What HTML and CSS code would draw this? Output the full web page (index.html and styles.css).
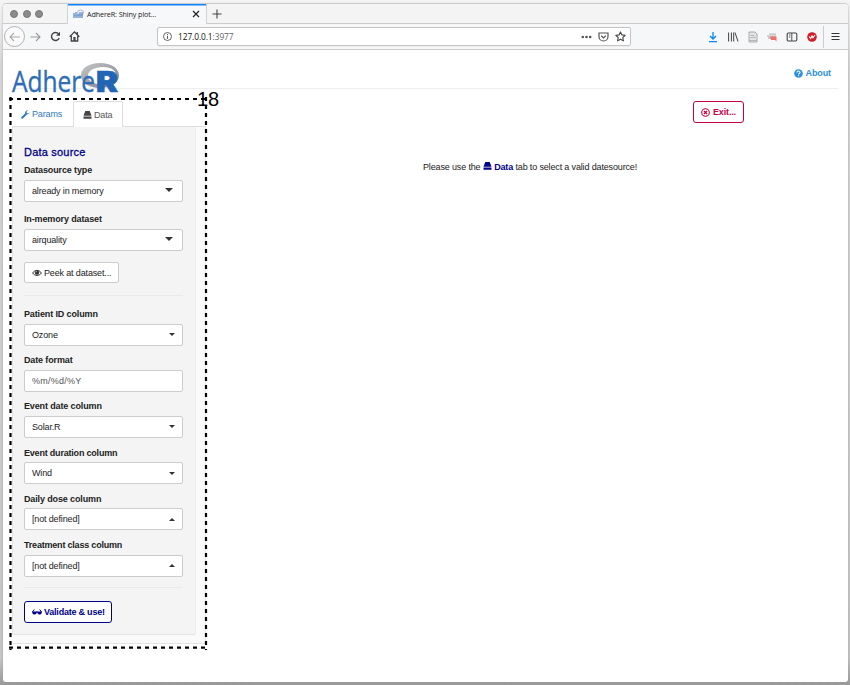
FILE: index.html
```html
<!DOCTYPE html>
<html lang="en">
<head>
<meta charset="utf-8">
<title>AdhereR: Shiny plot...</title>
<link rel="stylesheet" href="styles.css">
</head>
<body>
<svg class="defs" width="0" height="0">
  <symbol id="drive" viewBox="0 0 18 16"><path d="M4.500 0h9L17 9.500H1z M1 11h16v4.500H1z"/></symbol>
</svg>
<div class="window">
  <header class="tabbar">
    <div class="lights"><i></i><i></i><i></i></div>
    <div class="browser-tab">
      <svg class="favicon" viewBox="0 0 11 10"><ellipse cx="7.500" cy="3.500" rx="3" ry="2.500" fill="none" stroke="#a5b4cf"/><path d="M1 4v5M3 3v6M5 5v4M7 3v6M9 3v6" fill="none" stroke="#477bc0" stroke-width="1.100"/><path d="M1 6.500h9" stroke="#7ea2d4"/></svg>
      <span>AdhereR: Shiny plot...</span>
      <svg class="close" viewBox="0 0 8 8"><path d="M1 1l6 6M7 1L1 7" stroke="#222" stroke-width="1.200"/></svg>
    </div>
    <svg class="plus" viewBox="0 0 10 10"><path d="M5 .5v9M.5 5h9" stroke="#444" stroke-width="1.100"/></svg>
  </header>
  <nav class="toolbar">
    <div class="back"><svg width="12" height="10" viewBox="0 0 12 10"><path d="M11 5H1.500M5 1L1 5l4 4" fill="none" stroke="#aaa" stroke-width="1.100"/></svg></div>
    <svg class="forward" width="11" height="10" viewBox="0 0 11 10"><path d="M.5 5h9M6 1l4 4-4 4" fill="none" stroke="#999" stroke-width="1.100"/></svg>
    <svg class="reload" width="11" height="11" viewBox="0 0 11 11"><path d="M9.200 7A4 4 0 1 1 8.500 2.800" fill="none" stroke="#444" stroke-width="1.400"/><path d="M10 .7v4H6z" fill="#444"/></svg>
    <svg class="home" width="11" height="11" viewBox="0 0 11 11"><path d="M.7 5.700l4.800-4.800 4.800 4.800M2.300 5v5h6.400V5M8.300 1v2.500" fill="none" stroke="#444" stroke-width="1.300"/><path d="M4.400 6h2.200v4H4.400z" fill="#444"/></svg>
    <div class="address">
      <svg width="9" height="9" viewBox="0 0 9 9"><circle cx="4.500" cy="4.500" r="4" fill="none" stroke="#555" stroke-width=".9"/><path d="M4.500 2v1.100M4.500 3.900v3" stroke="#555"/></svg>
      <span class="url"><b>127.0.0.1</b>:3977</span>
      <svg class="dots" width="11" height="4" viewBox="0 0 11 4"><circle cx="1.800" cy="2" r="1.300"/><circle cx="5.500" cy="2" r="1.300"/><circle cx="9.200" cy="2" r="1.300"/></svg>
      <svg class="pocket" width="11" height="10" viewBox="0 0 11 10"><path d="M1 1h9v3.500a4.500 4.500 0 0 1-9 0zM3.200 3.700l2.300 2.200 2.300-2.200" fill="none" stroke="#555" stroke-width="1.200"/></svg>
      <svg class="star" width="11" height="11" viewBox="0 0 11 11"><path d="M5.500.9l1.400 3 3.300.4-2.400 2.200.6 3.400-2.900-1.700-2.900 1.700.6-3.400L.8 4.300l3.300-.4z" fill="none" stroke="#444" stroke-width="1.100" stroke-linejoin="round"/></svg>
    </div>
    <div class="tools">
      <svg viewBox="0 0 12 12"><path d="M6 1v7M3 5l3 3 3-3M2 10.700h8" fill="none" stroke="#0a84ff" stroke-width="1.300"/></svg>
      <svg viewBox="0 0 12 12"><path d="M1.600 1.500v9M4.400 1.500v9M6.700 1.500v9M8 1.500l3 9" fill="none" stroke="#444" stroke-width="1"/></svg>
      <svg viewBox="0 0 12 12"><path d="M2 1h6l2 2v8H2z" fill="#e5e5e5" stroke="#999" stroke-width=".8"/><path d="M3.500 4.500h4M3.500 6.500h5M2 9.500h8" stroke="#aaa" stroke-width=".8"/></svg>
      <svg viewBox="0 0 12 12"><path d="M3 3.200h7M1 5.200h9" stroke="#bbb" stroke-width="1.200"/><path d="M4 5.500h6.500V10.500L9 9H5z" fill="#ec7168"/><path d="M2 7h3" stroke="#999"/></svg>
      <svg viewBox="0 0 12 12"><rect x="1.200" y="2" width="9.600" height="8" rx="1.200" fill="none" stroke="#444" stroke-width="1.100"/><path d="M5.800 2v8M3 4h1.400M3 6h1.400" stroke="#444" stroke-width=".9"/></svg>
      <svg viewBox="0 0 12 12"><circle cx="6" cy="6" r="4.800" fill="#ce1e2a"/><path d="M3 5.500l1.600 2L6 5l1 1.800L9 4" fill="none" stroke="#fff" stroke-width="1.100"/></svg>
    </div>
    <svg class="menu" viewBox="0 0 9 9"><path d="M.5 1.500h8M.5 4.500h8M.5 7.500h8" stroke="#333"/></svg>
  </nav>
  <main class="page">
    <div class="masthead">
      <svg class="logo" width="110" height="34" viewBox="0 0 110 34">
        <defs><linearGradient id="ring" x1="0" y1="0" x2="1" y2="1"><stop offset="0" stop-color="#c5c6c9"/><stop offset="1" stop-color="#7d7f84"/></linearGradient></defs>
        <path fill="url(#ring)" fill-rule="evenodd" d="M88 0c11 0 19 5 19 12.500S99 25 88 25s-19-5-19-12.500S77 0 88 0zM91 4c-9 0-15 3.500-15 9s6 8.500 15 8.500 13-3 13-8.500S100 4 91 4z"/>
        <text class="logo-light" x="0" y="28.700" textLength="83" lengthAdjust="spacingAndGlyphs">Adhere</text>
        <text class="logo-bold" x="84" y="28.700" textLength="22" lengthAdjust="spacingAndGlyphs">R</text>
      </svg>
      <a class="about"><svg width="9" height="9" viewBox="0 0 9 9"><circle cx="4.500" cy="4.500" r="4.300" fill="#2b8fd9"/><path d="M3 3.600c0-2 3-2 3-.2 0 1.100-1.500 1-1.500 2M4.500 6.200v1.100" fill="none" stroke="#fff" stroke-width="1.100"/></svg>About</a>
    </div>
    <div class="columns">
      <section class="sidebar">
        <div class="tabs">
          <a class="tab link"><svg width="9" height="9" viewBox="0 0 9 9"><path d="M1.200 7.800L5 4" stroke="#337ab7" stroke-width="2" stroke-linecap="round"/><path d="M8.700 2.400L7.200 3.500 5.700 2.900 5.600 1.500 7.100.3A2.700 2.700 0 0 0 4 3.200 2.700 2.700 0 0 0 8.700 2.400z" fill="#337ab7"/></svg>Params</a>
          <a class="tab active"><svg width="9" height="8"><use href="#drive"/></svg>Data</a>
        </div>
        <div class="panel">
          <form class="well">
            <h4>Data source</h4>
            <div class="field source"><label>Datasource type</label><div class="control big">already in memory<i class="down"></i></div></div>
            <div class="field memory"><label>In-memory dataset</label><div class="control big">airquality<i class="down"></i></div></div>
            <a class="button peek"><svg width="10" height="8" viewBox="0 0 10 8"><path d="M.5 4Q5-1.500 9.500 4 5 9 .5 4z" fill="none" stroke="#333"/><circle cx="5" cy="3.600" r="2.200" fill="#333"/><path d="M4 3.300q0-1 1-1" fill="none" stroke="#fff" stroke-width=".6"/></svg>Peek at dataset...</a>
            <hr>
            <div class="field"><label>Patient ID column</label><div class="control">Ozone<i class="down"></i></div></div>
            <div class="field"><label>Date format</label><div class="control input">%m/%d/%Y</div></div>
            <div class="field"><label>Event date column</label><div class="control">Solar.R<i class="down"></i></div></div>
            <div class="field"><label class="long">Event duration column</label><div class="control">Wind<i class="down"></i></div></div>
            <div class="field"><label>Daily dose column</label><div class="control">[not defined]<i class="up"></i></div></div>
            <div class="field"><label class="long">Treatment class column</label><div class="control">[not defined]<i class="up"></i></div></div>
            <hr class="last">
            <a class="button validate"><svg width="10" height="6" viewBox="0 0 10 6"><path d="M0 2.500h4.700V4Q4 5.500 2.400 5.500T.3 4zM5.300 2.500H10L9.700 4Q9.200 5.500 7.600 5.500T5.300 4z" fill="#00008b"/><path d="M.5 3L2.300.5M9.500 3L7.700.5M4 3h2" stroke="#00008b" fill="none"/></svg>Validate &amp; use!</a>
          </form>
        </div>
      </section>
      <section class="content">
        <a class="exit"><svg width="9" height="9" viewBox="0 0 9 9"><circle cx="4.500" cy="4.500" r="3.800" fill="none" stroke="#c40046" stroke-width="1.100"/><path d="M3 3l3 3M6 3L3 6" stroke="#c40046" stroke-width="1.300"/></svg>Exit...</a>
        <p class="message">Please use the <svg width="9" height="8"><use href="#drive"/></svg> <b>Data</b> tab to select a valid datesource!</p>
      </section>
    </div>
  </main>
</div>
<svg class="callout" width="199" height="553"><path d="M0 2H199M0 550.700H199M1.500 0V553M197 0V553" fill="none" stroke="#000" stroke-width="2.200" stroke-dasharray="4 4"/></svg>
<span class="callout-number">18</span>
</body>
</html>
```

FILE: styles.css
```css
* { box-sizing: border-box; }
body { margin: 0; height: 685px; padding: 3px; overflow: hidden; background: linear-gradient(#f5f5f5, #d5d5d5 10%, #c4c4c4 96%, #999); font: 9px/14px "Liberation Sans", Arial, sans-serif; color: #222; }
svg { flex: none; display: block; }
.defs { position: absolute; }
.window { width: 845px; height: 679px; background: #fff; border-radius: 4px 4px 3px 3px; border-top: 1px solid #ccc; overflow: hidden; box-shadow: 0 1px 2px #999; }
.tabbar { height: 20px; display: flex; align-items: center; background: #f4f4f4; border-bottom: 1px solid #cbcbcb; }
.lights { display: flex; gap: 4.500px; padding-left: 7px; width: 64px; }
.lights i { width: 8px; height: 8px; border-radius: 50%; background: #8b8b8b; border: 1px solid #777; }
.browser-tab { width: 140px; height: 20px; display: flex; align-items: center; border: solid #d2d2d2; border-width: 0 1px; box-shadow: inset 0 1.500px #0a84ff; background: #f7f8fa; font: 7.200px "Open Sans", sans-serif; color: #222; padding: 1px 6px 0 5px; }
.favicon { width: 11px; height: 10px; margin-right: 3px; }
.browser-tab span { flex: 1; white-space: nowrap; letter-spacing: -.1px; }
.close { width: 8px; height: 8px; }
.plus { width: 10px; height: 10px; margin-left: 5px; }
.toolbar { height: 26px; display: flex; align-items: center; background: #f6f7f9; border-bottom: 1px solid #cbcbcb; }
.back { width: 21px; height: 21px; border: 1px solid #b2b2b2; border-radius: 50%; margin-left: 1px; display: flex; align-items: center; justify-content: center; background: #fafafa; }
.forward { margin-left: 5px; }
.reload { margin-left: 9px; }
.home { margin-left: 8px; }
.address { width: 474px; height: 19px; margin-left: 77px; border: 1px solid #c4c4c4; border-radius: 2px; background: #fff; display: flex; align-items: center; padding: 0 4px 0 5px; box-shadow: 0 1px 1px #eee; }
.url { flex: 1; margin-left: 6px; font: 8.300px "Open Sans", sans-serif; color: #666; letter-spacing: -.05px; }
.url b { font-weight: 400; color: #111; }
.dots { fill: #555; }
.pocket { margin-left: 6px; }
.star { margin-left: 6px; }
.tools { display: flex; gap: 7.800px; margin-left: 76px; }
.tools svg { width: 12px; height: 12px; }
.menu { box-sizing: content-box; width: 9px; height: 9px; border-left: 1px solid #ccc; margin-left: 5px; padding: 6px 1px 7px 7px; }
.masthead { height: 39px; margin: 0 10px 0 9px; border-bottom: 1px solid #eee; display: flex; justify-content: space-between; }
.logo { margin-top: 13px; overflow: visible; }
.logo-light { font: 29.500px "Open Sans", sans-serif; fill: #2f6db5; stroke: #2f6db5; stroke-width: .4; }
.logo-bold { font: 900 29px Inter, sans-serif; fill: #2265b4; stroke: #2265b4; stroke-width: .7; }
.about { display: flex; align-items: center; gap: 3px; height: 14px; margin: 16px 7px 0 0; font-weight: 700; color: #2b8fd9; letter-spacing: -.1px; }
.columns { display: flex; }
.sidebar { width: 194px; margin: 12px 0 0 9px; }
.tabs { height: 26px; display: flex; border-bottom: 1px solid #ddd; }
.tab { height: 26px; display: flex; align-items: center; gap: 2px; padding: 0 9px; color: #555; letter-spacing: -.15px; }
.link { color: #337ab7; width: 61px; }
.active { width: 50px; background: #fff; border: 1px solid #ddd; border-bottom: 0; border-radius: 2px 2px 0 0; fill: #444; }
.panel { height: 517px; background: #fafafa; border: solid #e5e5e5; border-width: 0 1px 1px 0; }
.well { width: 184px; height: 508px; background: #f4f4f4; border: 1px solid #e3e3e3; border-top: 0; border-right-color: #eee; border-radius: 0 0 2px 2px; padding: 17px 13px 0 11px; }
h4 { font-size: 11px; line-height: 16px; font-weight: 400; margin: 0; color: #00008b; letter-spacing: .2px; -webkit-text-stroke: .3px #00008b; }
.field { height: 46.200px; }
.source { height: 49px; margin-top: 3px; }
.memory { height: 50px; }
label { display: block; height: 16.600px; line-height: 14px; font-weight: 700; white-space: nowrap; letter-spacing: -.13px; }
.long { letter-spacing: -.2px; }
.control { width: 159px; height: 22px; border: 1px solid #ccc; border-radius: 2px; background: #fff; padding: 0 7px; display: flex; align-items: center; justify-content: space-between; letter-spacing: -.15px; }
.big { padding-right: 9px; }
.input { color: #555; letter-spacing: .25px; }
.down, .up { border: 3px solid transparent; border-bottom: 0; border-top: 3px solid #333; }
.control .up { border-top: 0; border-bottom: 3px solid #333; }
.big .down { border-width: 4px 4px 0; margin-bottom: 1px; }
.button { display: flex; align-items: center; gap: 2px; height: 22px; border: 1px solid #ccc; border-radius: 2px; background: #fff; padding: 0 7px; white-space: nowrap; letter-spacing: -.15px; }
.peek { width: 95px; height: 21px; }
hr { width: 159px; margin: 12px 0 11px; border: 0; border-top: 1px solid #e9e9e9; }
.last { margin: 3px 0 13px; }
.validate { width: 88px; color: #00008b; border-color: #00008b; font-weight: 700; border-radius: 3px; letter-spacing: -.22px; }
.content { flex: 1; }
.exit { width: 51px; height: 22px; margin: 12px 0 0 487px; display: flex; align-items: center; gap: 3px; padding-left: 7px; border: 1px solid #c40046; border-radius: 3px; color: #c40046; font-weight: 700; letter-spacing: -.15px; }
.message { margin: 37px 0 0 217px; white-space: nowrap; letter-spacing: -.15px; }
.message svg { display: inline-block; fill: #00008b; }
.message b { color: #00008b; }
.callout { position: absolute; left: 9px; top: 97px; }
.callout-number { position: absolute; left: 197px; top: 87px; font: 20px/24px "Liberation Sans", Arial, sans-serif; color: #000; }
```
